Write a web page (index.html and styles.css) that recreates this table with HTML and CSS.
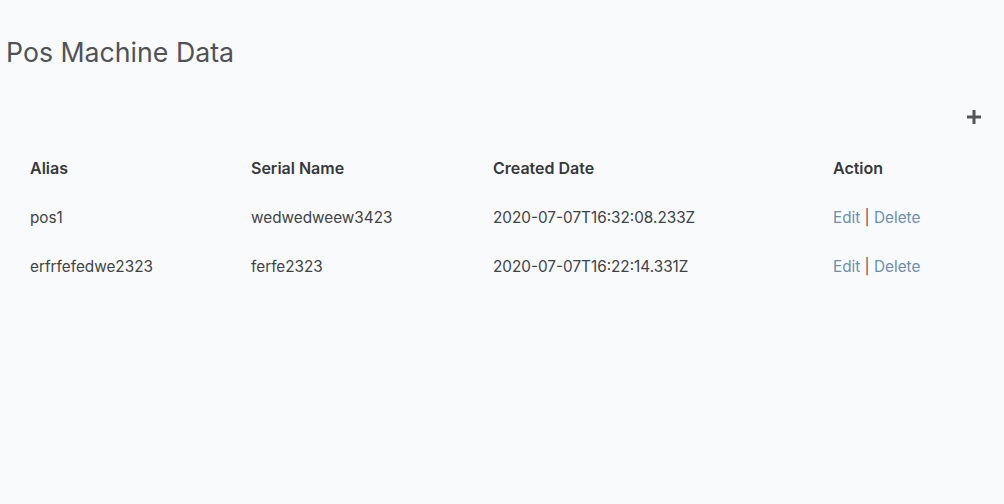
FILE: index.html
```html
<!DOCTYPE html>
<html>
<head>
<meta charset="utf-8">
<link rel="stylesheet" href="styles.css">
</head>
<body>
<main class="page">
  <h1 class="title">Pos Machine Data</h1>
  <div class="toolbar">
    <button class="add" aria-label="Add">
      <svg width="16" height="16" viewBox="0 0 16 16"><path d="M8 1v14M1 8h14" stroke="#555" stroke-width="3"/></svg>
    </button>
  </div>
  <div class="table">
    <div class="row head">
      <div>Alias</div><div>Serial Name</div><div>Created Date</div><div>Action</div>
    </div>
    <div class="row">
      <div>pos1</div><div>wedwedweew3423</div><div>2020-07-07T16:32:08.233Z</div>
      <div><a class="link">Edit</a> <span class="sep">|</span> <a class="link">Delete</a></div>
    </div>
    <div class="row">
      <div>erfrfefedwe2323</div><div>ferfe2323</div><div>2020-07-07T16:22:14.331Z</div>
      <div><a class="link">Edit</a> <span class="sep">|</span> <a class="link">Delete</a></div>
    </div>
  </div>
</main>
</body>
</html>
```
FILE: styles.css
```css
html, body {
  margin: 0;
  background: #f9fafc;
}
body {
  font-family: Inter, "Noto Sans", sans-serif;
  color: #404246;
  width: 1004px;
  height: 504px;
}
.page {
  padding: 0 22px 0 6px;
}
.title {
  margin: 0;
  padding-top: 36px;
  font-size: 26.7px;
  font-weight: 400;
  color: #505257;
  line-height: 32px;
}
.toolbar {
  display: flex;
  justify-content: flex-end;
  margin-top: 41px;
}
.add {
  border: 0;
  background: none;
  padding: 0;
  width: 16px;
  height: 16px;
  display: flex;
}
.table {
  margin-top: 18px;
  padding-left: 24px;
  font-size: 15.3px;
}
.row {
  display: grid;
  grid-template-columns: 221px 242px 340px auto;
  height: 49.5px;
  align-items: center;
}
.head {
  font-weight: 600;
  font-size: 16px;
  color: #36383c;
}
.link {
  color: #6d8fab;
  cursor: pointer;
}
.sep {
  color: #555;
}
```
